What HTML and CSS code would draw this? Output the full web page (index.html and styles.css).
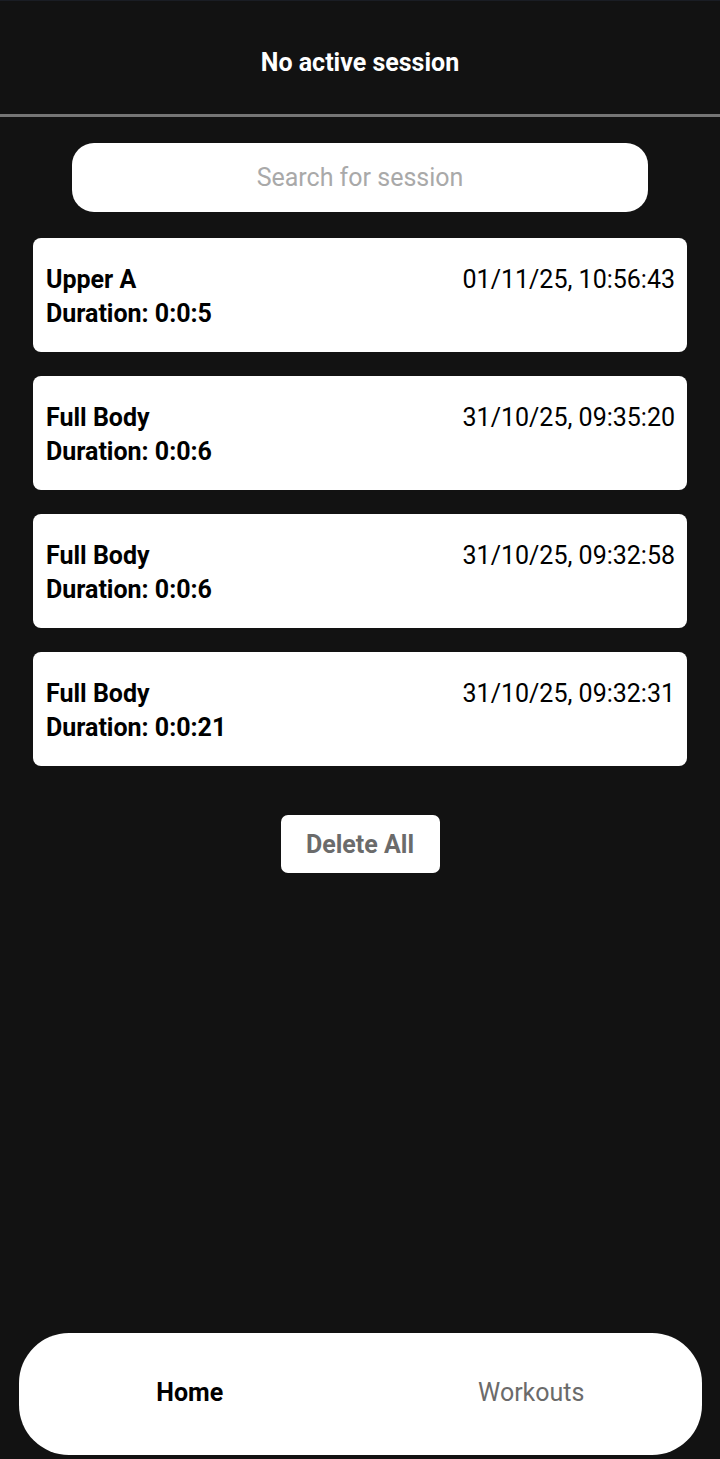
FILE: index.html
```html
<!DOCTYPE html>
<html lang="en">
<head>
<meta charset="utf-8">
<title>Sessions</title>
<link rel="stylesheet" href="styles.css">
</head>
<body>
<div class="app">
  <header class="header">
    <h1 class="header-title">No active session</h1>
  </header>
  <main class="main">
    <div class="search">
      <input class="search-input" type="text" placeholder="Search for session">
    </div>
    <ul class="sessions">
      <li class="card">
        <div class="card-row">
          <span class="card-title">Upper A</span>
          <span class="card-date">01/11/25, 10:56:43</span>
        </div>
        <div class="card-duration">Duration: 0:0:5</div>
      </li>
      <li class="card">
        <div class="card-row">
          <span class="card-title">Full Body</span>
          <span class="card-date">31/10/25, 09:35:20</span>
        </div>
        <div class="card-duration">Duration: 0:0:6</div>
      </li>
      <li class="card">
        <div class="card-row">
          <span class="card-title">Full Body</span>
          <span class="card-date">31/10/25, 09:32:58</span>
        </div>
        <div class="card-duration">Duration: 0:0:6</div>
      </li>
      <li class="card">
        <div class="card-row">
          <span class="card-title">Full Body</span>
          <span class="card-date">31/10/25, 09:32:31</span>
        </div>
        <div class="card-duration">Duration: 0:0:21</div>
      </li>
    </ul>
    <div class="actions">
      <button class="delete-btn" type="button">Delete All</button>
    </div>
  </main>
  <nav class="nav">
    <a class="nav-item active">Home</a>
    <a class="nav-item">Workouts</a>
  </nav>
</div>
</body>
</html>
```

FILE: styles.css
```css
* { box-sizing: border-box; }

html, body {
  margin: 0;
  padding: 0;
  height: 100%;
  background: #121212;
}

body {
  font-family: Roboto, "Noto Sans", "Liberation Sans", sans-serif;
  color: #000;
}

.app {
  height: 1459px;
  display: flex;
  flex-direction: column;
  border-top: 1px solid #1a1d24;
}

.header {
  height: 116px;
  display: flex;
  align-items: center;
  justify-content: center;
  border-bottom: 3px solid #757575;
  padding-top: 9px;
}

.header-title {
  margin: 0;
  font-size: 25px;
  font-weight: 700;
  color: #fff;
}

.main {
  flex: 1;
  display: flex;
  flex-direction: column;
  align-items: center;
  padding-top: 26px;
}

.search {
  width: 576px;
}

.search-input {
  width: 100%;
  height: 69px;
  border: none;
  border-radius: 22px;
  background: #fff;
  text-align: center;
  font-family: inherit;
  font-size: 25px;
  color: #000;
  outline: none;
}

.search-input::placeholder {
  color: #a9a9a9;
}

.sessions {
  list-style: none;
  margin: 26px 0 0;
  padding: 0;
  width: 654px;
  display: flex;
  flex-direction: column;
  gap: 24px;
}

.card {
  height: 114px;
  background: #fff;
  border-radius: 8px;
  padding: 25px 12px 0 13px;
  font-size: 25px;
  line-height: 34px;
}

.card-row {
  display: flex;
  justify-content: space-between;
}

.card-title {
  font-weight: 700;
}

.card-date {
  font-weight: 400;
}

.card-duration {
  font-weight: 700;
}

.actions {
  margin-top: 49px;
}

.delete-btn {
  width: 159px;
  height: 58px;
  border: none;
  border-radius: 7px;
  background: #fff;
  font-family: inherit;
  font-size: 25px;
  font-weight: 700;
  color: #6b6b6b;
  padding: 0;
}

.nav {
  margin: 0 18px 4px 19px;
  height: 122px;
  background: #fff;
  border-radius: 50px;
  display: flex;
  align-items: center;
}

.nav-item {
  flex: 1;
  text-align: center;
  font-size: 25px;
  color: #6b6b6b;
  padding-bottom: 4px;
}

.nav-item.active {
  color: #000;
  font-weight: 700;
}
```
